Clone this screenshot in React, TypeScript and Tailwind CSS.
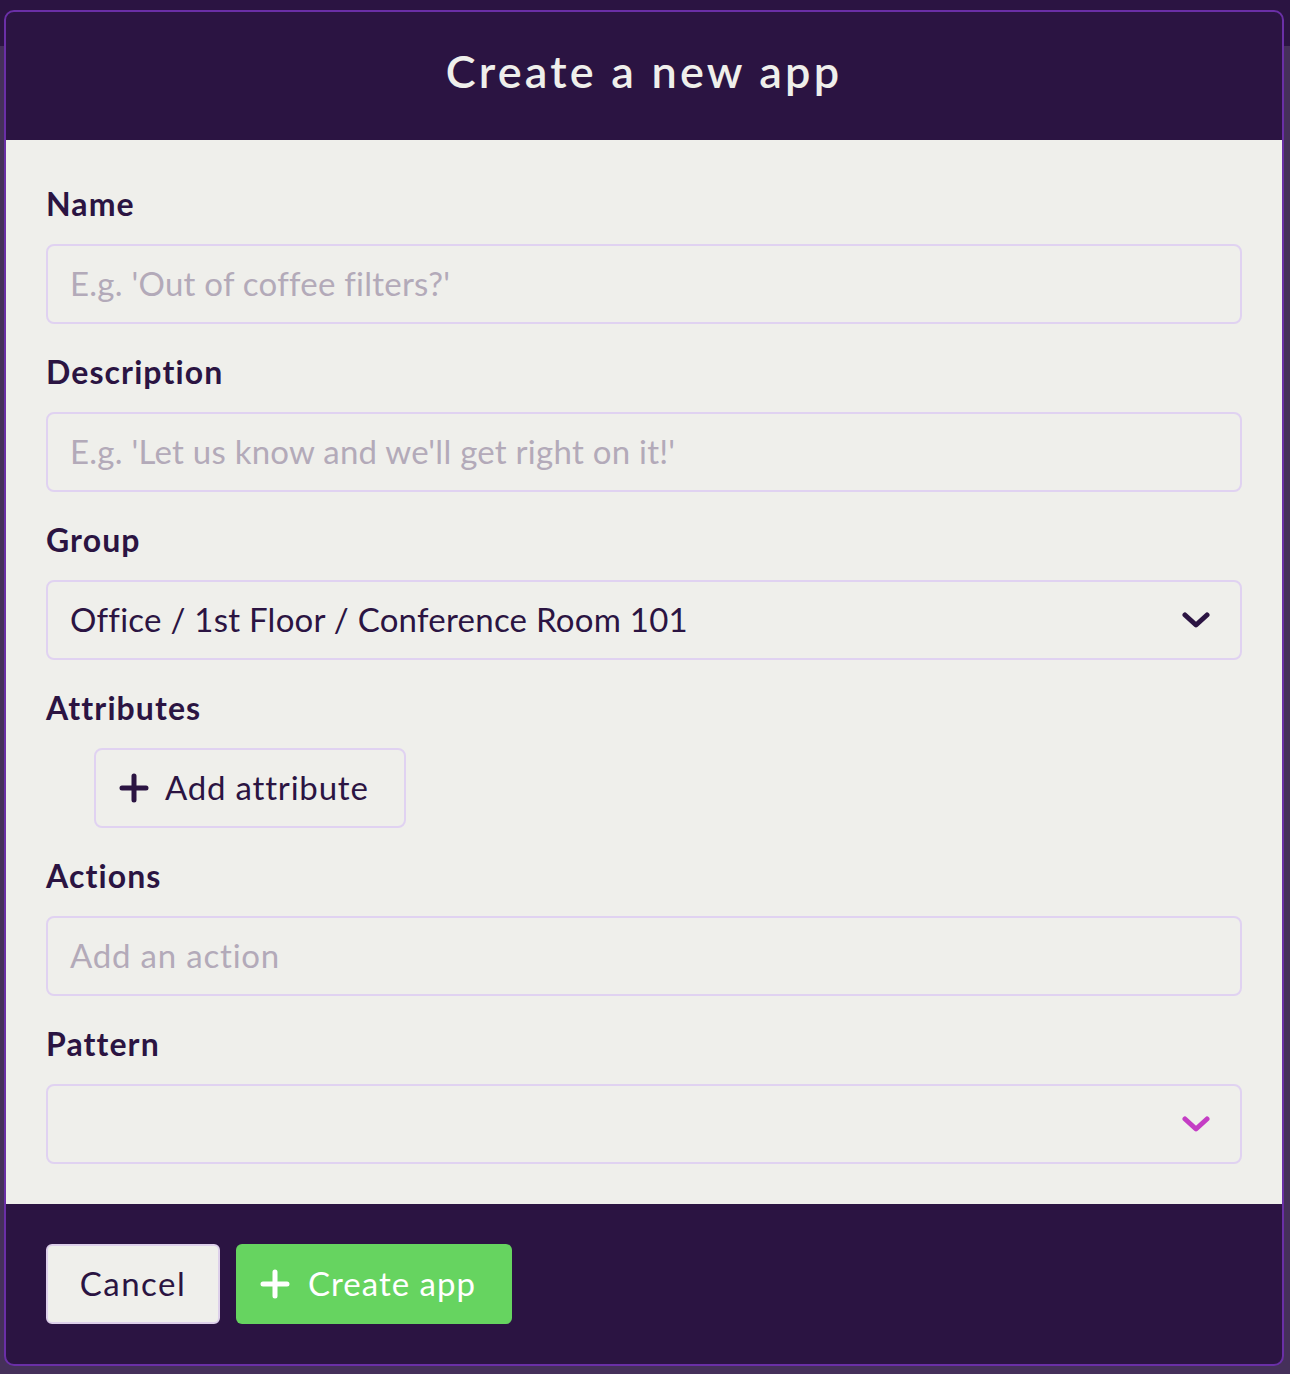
import React from "react";

const Chevron = ({ color }: { color: string }) => (
  <svg width="28" height="18" viewBox="0 0 28 18" fill="none">
    <path d="M3 4l11 10L25 4" stroke={color} strokeWidth="5" strokeLinecap="round" strokeLinejoin="round" />
  </svg>
);

const Plus = ({ color }: { color: string }) => (
  <svg width="30" height="30" viewBox="0 0 30 30" fill="none">
    <path d="M15 3v24M3 15h24" stroke={color} strokeWidth="5" strokeLinecap="round" />
  </svg>
);

const Label = ({ children }: { children: React.ReactNode }) => (
  <div className="h-[40px] flex items-center text-[32px] font-bold text-[#2b1442] leading-none mb-[20px] tracking-[1.1px]">
    {children}
  </div>
);

const Field = ({ children }: { children: React.ReactNode }) => (
  <div className="h-[80px] w-full rounded-[8px] border-2 border-[#e0d2f1] flex items-center pl-[22px] pr-[30px] text-[33px] tracking-[0.25px]">
    {children}
  </div>
);

export default function App() {
  return (
    <div className="relative w-[1290px] h-[1374px] bg-[#45305a] overflow-hidden" style={{ fontFamily: "Lato, 'Open Sans', sans-serif" }}>
      <div className="h-[46px] bg-[#2b1442]" />
      <div className="absolute left-[4px] top-[10px] w-[1280px] h-[1356px] rounded-[10px] border-2 border-[#6a2fa6] bg-[#2b1442] overflow-hidden flex flex-col">
        <div className="h-[128px] flex items-center justify-center text-[#efefeb] text-[45px] font-semibold tracking-[3.2px] pb-[8px]">
          Create a new app
        </div>
        <div className="bg-[#efefeb] px-[40px] pt-[44px] pb-[40px] flex flex-col">
          <Label>Name</Label>
          <Field><span className="text-[#b3aab9]">E.g. 'Out of coffee filters?'</span></Field>
          <div className="h-[28px]" />
          <Label>Description</Label>
          <Field><span className="text-[#b3aab9]">E.g. 'Let us know and we'll get right on it!'</span></Field>
          <div className="h-[28px]" />
          <Label>Group</Label>
          <Field>
            <span className="flex-1 text-[#2b1442]">Office / 1st Floor / Conference Room 101</span>
            <Chevron color="#2b1442" />
          </Field>
          <div className="h-[28px]" />
          <Label>Attributes</Label>
          <div className="pl-[48px]">
            <div className="h-[80px] w-[312px] rounded-[8px] border-2 border-[#e0d2f1] flex items-center pl-[23px] gap-[16px] text-[33px] tracking-[0.8px] text-[#2b1442]">
              <Plus color="#2b1442" />
              <span>Add attribute</span>
            </div>
          </div>
          <div className="h-[28px]" />
          <Label>Actions</Label>
          <Field><span className="text-[#b3aab9] tracking-[0.8px]">Add an action</span></Field>
          <div className="h-[28px]" />
          <Label>Pattern</Label>
          <Field>
            <span className="flex-1" />
            <Chevron color="#c43dc4" />
          </Field>
        </div>
        <div className="flex-1 px-[40px] pt-[40px] flex gap-[16px]">
          <div className="h-[80px] w-[174px] rounded-[6px] border-2 border-[#ddd0ea] bg-[#efefeb] flex items-center justify-center text-[33px] tracking-[1.5px] text-[#2b1442]">
            Cancel
          </div>
          <div className="h-[80px] w-[276px] rounded-[6px] bg-[#66d460] flex items-center pl-[24px] gap-[18px] text-[33px] tracking-[1px] text-white">
            <Plus color="#ffffff" />
            <span>Create app</span>
          </div>
        </div>
      </div>
    </div>
  );
}
